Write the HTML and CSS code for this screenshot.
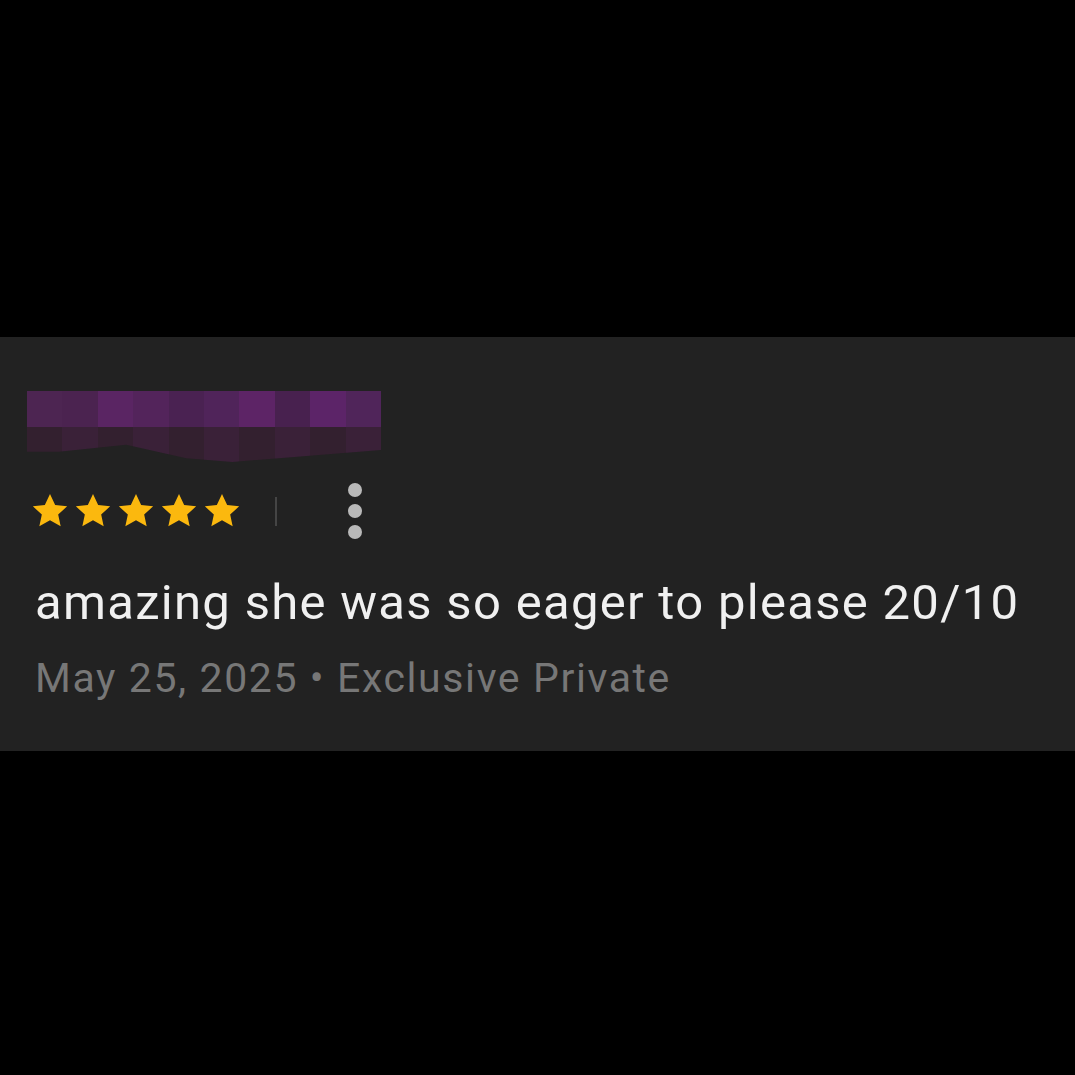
FILE: index.html
```html
<!DOCTYPE html>
<html lang="en">
<head>
    <meta charset="UTF-8">
    <title>Review</title>
    <link rel="stylesheet" href="styles.css">
</head>
<body>
    <div class="review">
        <!-- name is blurred out -->
        <div class="name-blur">
            <div class="blur-row top">
                <span></span><span></span><span></span><span></span><span></span><span></span><span></span><span></span><span></span><span></span>
            </div>
            <div class="blur-row bottom">
                <span></span><span></span><span></span><span></span><span></span><span></span><span></span><span></span><span></span><span></span>
            </div>
        </div>
        <div class="rating-row">
            <div class="stars">
                <svg viewBox="0 0 24 24"><path d="M12 1.8l3.1 6.6 7.2.8-5.4 4.9 1.5 7.1L12 17.6l-6.4 3.6 1.5-7.1-5.4-4.9 7.2-.8z"/></svg>
                <svg viewBox="0 0 24 24"><path d="M12 1.8l3.1 6.6 7.2.8-5.4 4.9 1.5 7.1L12 17.6l-6.4 3.6 1.5-7.1-5.4-4.9 7.2-.8z"/></svg>
                <svg viewBox="0 0 24 24"><path d="M12 1.8l3.1 6.6 7.2.8-5.4 4.9 1.5 7.1L12 17.6l-6.4 3.6 1.5-7.1-5.4-4.9 7.2-.8z"/></svg>
                <svg viewBox="0 0 24 24"><path d="M12 1.8l3.1 6.6 7.2.8-5.4 4.9 1.5 7.1L12 17.6l-6.4 3.6 1.5-7.1-5.4-4.9 7.2-.8z"/></svg>
                <svg viewBox="0 0 24 24"><path d="M12 1.8l3.1 6.6 7.2.8-5.4 4.9 1.5 7.1L12 17.6l-6.4 3.6 1.5-7.1-5.4-4.9 7.2-.8z"/></svg>
            </div>
            <div class="divider"></div>
            <div class="more">
                <span></span><span></span><span></span>
            </div>
        </div>
        <p class="text">amazing she was so eager to please 20/10</p>
        <p class="meta">May 25, 2025 &bull; Exclusive Private</p>
    </div>
</body>
</html>
```

FILE: styles.css
```css
body {
    margin: 0;
    background: #000000;
    font-family: Roboto, "Liberation Sans", sans-serif;
}
.review {
    margin-top: 337px;
    height: 414px;
    box-sizing: border-box;
    background: #222222;
    padding: 54px 35px 0 35px;
}

/* blurred name */
.name-blur {
    width: 354px;
    margin-left: -8px;
}
.blur-row {
    display: flex;
}
.blur-row span {
    flex: 1;
}
.blur-row.top {
    height: 36px;
}
.blur-row.top span:nth-child(1) { background: #4d2552; }
.blur-row.top span:nth-child(2) { background: #4b2350; }
.blur-row.top span:nth-child(3) { background: #5a2563; }
.blur-row.top span:nth-child(4) { background: #53245b; }
.blur-row.top span:nth-child(5) { background: #4a2252; }
.blur-row.top span:nth-child(6) { background: #50245a; }
.blur-row.top span:nth-child(7) { background: #5d2466; }
.blur-row.top span:nth-child(8) { background: #48214f; }
.blur-row.top span:nth-child(9) { background: #5c2468; }
.blur-row.top span:nth-child(10) { background: #50255a; }
.blur-row.bottom {
    height: 35px;
    clip-path: polygon(0 0, 100% 0, 100% 66%, 58% 100%, 45% 89%, 28% 51%, 9% 71%, 0 71%);
}
.blur-row.bottom span:nth-child(odd) { background: #33202f; }
.blur-row.bottom span:nth-child(even) { background: #3a2138; }

.rating-row {
    display: flex;
    align-items: center;
    margin-top: 21px;
    height: 56px;
}
.stars {
    display: flex;
    gap: 3px;
    margin-left: -5px;
}
.stars svg {
    width: 40px;
    height: 40px;
    fill: #fbb80e;
}
.divider {
    width: 2px;
    height: 29px;
    background: #454545;
    margin-left: 33px;
}
.more {
    display: flex;
    flex-direction: column;
    gap: 7px;
    margin-left: 71px;
}
.more span {
    width: 14px;
    height: 14px;
    border-radius: 50%;
    background: #b9b9b9;
}

.text {
    margin: 36px 0 0 0;
    color: #f0f0f0;
    font-size: 49px;
    line-height: 56px;
    letter-spacing: 1.3px;
}
.meta {
    margin: 23px 0 0 0;
    color: #777777;
    font-size: 41px;
    line-height: 48px;
    letter-spacing: 1.6px;
}
```
